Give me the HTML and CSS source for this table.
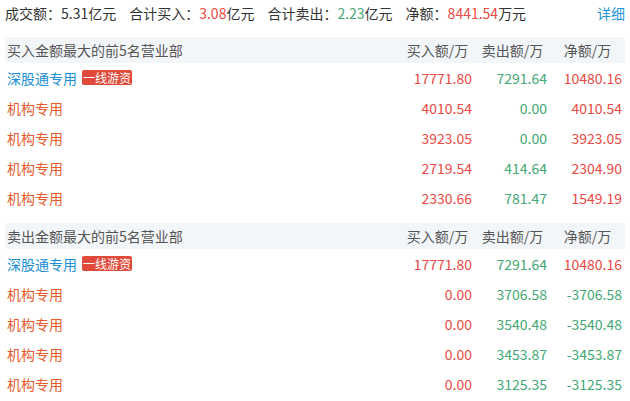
FILE: index.html
```html
<!DOCTYPE html>
<html>
<head>
    <title>龙虎榜</title>
    <link rel="stylesheet" href="styles.css">
</head>
<body>
    <div class="summary">
        <span class="item">成交额：5.31亿元</span>
        <span class="item">合计买入：<span class="up">3.08</span>亿元</span>
        <span class="item">合计卖出：<span class="down">2.23</span>亿元</span>
        <span class="item">净额：<span class="up">8441.54</span>万元</span>
        <a class="detail" href="#">详细</a>
    </div>

    <div class="table">
        <div class="row head">
            <div class="name">买入金额最大的前5名营业部</div>
            <div class="col">买入额/万</div>
            <div class="col">卖出额/万</div>
            <div class="col">净额/万</div>
        </div>
        <div class="row">
            <div class="name hk">深股通专用<span class="tag">一线游资</span></div>
            <div class="num up">17771.80</div>
            <div class="num down">7291.64</div>
            <div class="num up">10480.16</div>
        </div>
        <div class="row">
            <div class="name org">机构专用</div>
            <div class="num up">4010.54</div>
            <div class="num down">0.00</div>
            <div class="num up">4010.54</div>
        </div>
        <div class="row">
            <div class="name org">机构专用</div>
            <div class="num up">3923.05</div>
            <div class="num down">0.00</div>
            <div class="num up">3923.05</div>
        </div>
        <div class="row">
            <div class="name org">机构专用</div>
            <div class="num up">2719.54</div>
            <div class="num down">414.64</div>
            <div class="num up">2304.90</div>
        </div>
        <div class="row">
            <div class="name org">机构专用</div>
            <div class="num up">2330.66</div>
            <div class="num down">781.47</div>
            <div class="num up">1549.19</div>
        </div>
    </div>

    <div class="table">
        <div class="row head">
            <div class="name">卖出金额最大的前5名营业部</div>
            <div class="col">买入额/万</div>
            <div class="col">卖出额/万</div>
            <div class="col">净额/万</div>
        </div>
        <div class="row">
            <div class="name hk">深股通专用<span class="tag">一线游资</span></div>
            <div class="num up">17771.80</div>
            <div class="num down">7291.64</div>
            <div class="num up">10480.16</div>
        </div>
        <div class="row">
            <div class="name org">机构专用</div>
            <div class="num up">0.00</div>
            <div class="num down">3706.58</div>
            <div class="num down">-3706.58</div>
        </div>
        <div class="row">
            <div class="name org">机构专用</div>
            <div class="num up">0.00</div>
            <div class="num down">3540.48</div>
            <div class="num down">-3540.48</div>
        </div>
        <div class="row">
            <div class="name org">机构专用</div>
            <div class="num up">0.00</div>
            <div class="num down">3453.87</div>
            <div class="num down">-3453.87</div>
        </div>
        <div class="row">
            <div class="name org">机构专用</div>
            <div class="num up">0.00</div>
            <div class="num down">3125.35</div>
            <div class="num down">-3125.35</div>
        </div>
    </div>
</body>
</html>
```

FILE: styles.css
```css
body {
    margin: 0;
    padding: 0 5px;
    font-family: "Microsoft YaHei", "Noto Sans CJK SC", "Noto Sans", sans-serif;
    font-size: 14px;
    color: #333;
    background: #fff;
}
.summary {
    display: flex;
    height: 26px;
    line-height: 26px;
    white-space: nowrap;
}
.summary .item {
    margin-right: 13px;
}
.detail {
    margin-left: auto;
    color: #1e96d8;
    text-decoration: none;
}
.up {
    color: #ea4a45;
}
.down {
    color: #44a875;
}
.table {
    margin-top: 11px;
}
.table + .table {
    margin-top: 10px;
}
.row {
    display: grid;
    grid-template-columns: 1fr 75px 75px 75px;
    height: 30px;
    line-height: 30px;
    white-space: nowrap;
}
.row.head {
    height: 26px;
    line-height: 26px;
    background: #f3f6f9;
    color: #555;
}
.name {
    padding-left: 2px;
}
.name.hk {
    color: #1b8fd2;
}
.name.org {
    color: #e65a2c;
}
.tag {
    display: inline-block;
    margin-left: 5px;
    padding: 0 1px;
    height: 15px;
    line-height: 15px;
    font-size: 12px;
    color: #fff;
    background: #df4a3a;
    border-radius: 2px;
    vertical-align: 1px;
}
.col {
    text-align: center;
}
.num {
    text-align: right;
    padding-right: 3px;
}
```
